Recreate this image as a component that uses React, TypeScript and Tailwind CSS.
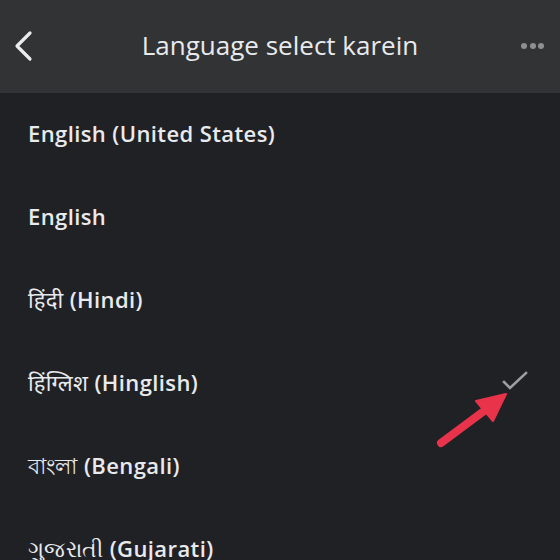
import React from "react";

const items: [string, string][] = [
  ["", "English (United States)"],
  ["", "English"],
  ["हिंदी ", "(Hindi)"],
  ["हिंग्लिश ", "(Hinglish)"],
  ["বাংলা ", "(Bengali)"],
  ["ગુજરાતી ", "(Gujarati)"],
];

export default function App() {
  return (
    <div
      className="relative w-[560px] h-[560px] overflow-hidden bg-[#202124]"
      style={{ fontFamily: '"Open Sans", "Noto Sans", sans-serif' }}
    >
      <div className="h-[93px] bg-[#323335] flex items-center relative">
        <svg className="absolute left-[12px] top-[29px]" width="24" height="34" viewBox="0 0 24 34">
          <path d="M18 4 L5 17 L18 30" fill="none" stroke="#ececec" strokeWidth="3.2" strokeLinecap="round" strokeLinejoin="round" />
        </svg>
        <div className="flex-1 text-center text-[26px] text-[#e8eaed] leading-none tracking-[0px] pb-[3px]">
          Language select karein
        </div>
        <div className="absolute right-[16px] top-[43px] flex gap-[2.5px]">
          <span className="w-[6px] h-[6px] rounded-full bg-[#8e8f91]" />
          <span className="w-[6px] h-[6px] rounded-full bg-[#8e8f91]" />
          <span className="w-[6px] h-[6px] rounded-full bg-[#8e8f91]" />
        </div>
      </div>
      <div className="flex flex-col">
        {items.map(([native, latin], i) => (
          <div key={i} className="h-[83px] flex items-center pl-[28px] pr-[30px] pb-[3px] justify-between">
            <span className="text-[22px] text-[#e8eaed] leading-none tracking-[0.4px] whitespace-nowrap">
              {native && <span className="font-normal">{native}</span>}
              <span className="font-semibold">{latin}</span>
            </span>
            {i === 3 && (
              <svg width="30" height="24" viewBox="0 0 30 24">
                <path d="M4 12 L10 18 L26 3" fill="none" stroke="#9aa0a6" strokeWidth="2.6" strokeLinecap="square" />
              </svg>
            )}
          </div>
        ))}
      </div>
      <svg className="absolute left-0 top-0" width="560" height="560" viewBox="0 0 560 560">
        <line x1="441" y1="443" x2="484" y2="411" stroke="#e8334a" strokeWidth="8" strokeLinecap="round" />
        <polygon points="506,394 476,401 493,421" fill="#e8334a" stroke="#e8334a" strokeWidth="2" strokeLinejoin="round" />
      </svg>
    </div>
  );
}
